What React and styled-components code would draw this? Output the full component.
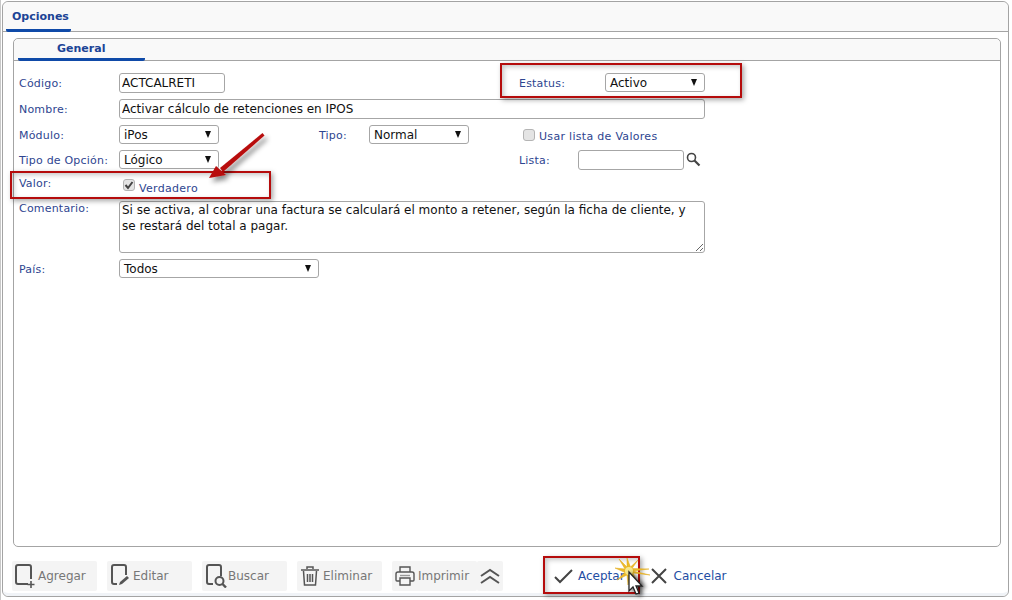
import React from "react"
import styled, { createGlobalStyle } from "styled-components"

const GlobalStyle = createGlobalStyle`
  html, body {
    margin: 0;
    padding: 0;
    background: #fff;
    font-family: "DejaVu Sans", Verdana, sans-serif;
  }
  * { box-sizing: border-box; }
`

const Page = styled.div`
  position: relative;
  width: 1012px;
  height: 600px;
  padding: 1px 3px 3px 2px;
  overflow: hidden;
  box-shadow: inset 1px 0 0 #c8c8c8;
`

const Window = styled.div`
  display: flex;
  flex-direction: column;
  height: 100%;
  border: 1px solid #a4a4a4;
  border-radius: 6px;
  background: #fff;
`

const TabBar = styled.div`
  display: flex;
  height: 30px;
  padding-left: 3px;
  border-bottom: 1px solid #a4a4a4;
  background: #f9f9f9;
  border-radius: 6px 6px 0 0;
`

const Tab = styled.div`
  width: ${p => p.$width}px;
  height: ${p => p.$height}px;
  padding-left: ${p => p.$indent}px;
  line-height: ${p => p.$height - 3 + (p.$drop || 0)}px;
  font-size: 11px;
  font-weight: bold;
  color: #1c4496;
  border-bottom: 3px solid #0f4aa8;
  border-radius: 0 0 2px 2px;
`

const Content = styled.div`
  flex: 1;
  padding: 6px 7px 0 10px;
  min-height: 0;
`

const InnerPanel = styled.div`
  height: 509px;
  border: 1px solid #a4a4a4;
  border-radius: 5px;
  background: #fff;
`

const InnerTabBar = styled.div`
  display: flex;
  height: 22px;
  padding-left: 4px;
  border-bottom: 1px solid #a4a4a4;
  background: #f9f9f9;
  border-radius: 5px 5px 0 0;
`

const Form = styled.div`
  display: grid;
  grid-template-columns: 100px 200px 50px 150px 86px 100px;
  grid-template-rows: 20px 20px 19px 19px 20px 52px 20px;
  row-gap: 6px;
  padding: 12px 0 0 5px;
`

const Label = styled.div`
  grid-column: ${p => p.$col || 1};
  font-size: 11px;
  line-height: 20px;
  letter-spacing: 0.2px;
  color: #2e4590;
  white-space: nowrap;
  transform: translateY(${p => p.$shift || 1}px);
`

const Field = styled.input`
  grid-column: ${p => p.$col || "2"};
  width: ${p => p.$width}px;
  height: 20px;
  padding: 0 2px;
  border: 1px solid #a6a6a6;
  border-radius: 3px;
  outline: none;
  background: #fff;
  color: #111;
  font-family: inherit;
  font-size: 12px;
`

const Select = styled.div`
  grid-column: ${p => p.$col || 2};
  display: flex;
  align-items: center;
  justify-content: space-between;
  width: ${p => p.$width}px;
  height: 19px;
  padding: 0 7px 0 4px;
  border: 1px solid #a6a6a6;
  border-radius: 3px;
  background: #fff;
  color: #111;
  font-size: 12px;
`

const Caret = styled.span`
  width: 0;
  height: 0;
  border-left: 3.5px solid transparent;
  border-right: 3.5px solid transparent;
  border-top: 7px solid #111;
`

const CheckRow = styled.div`
  grid-column: ${p => p.$col};
  display: flex;
  align-items: center;
  gap: 4px;
  padding-left: 4px;
`

const CheckBox = styled.span`
  display: flex;
  align-items: center;
  justify-content: center;
  width: 12px;
  height: 12px;
  border: 1px solid #b4b4b4;
  border-radius: 3px;
  background: #e4e4e4;
`

const CheckText = styled.span`
  font-size: 11px;
  letter-spacing: 0.3px;
  color: #2e4590;
  transform: translateY(${p => p.$shift || 0}px);
`

const LookupCell = styled.div`
  grid-column: 5 / 7;
  display: flex;
  align-items: center;
  gap: 2px;
`

const LookupLabel = styled(Label)`
  width: 57px;
`

const Comment = styled.textarea`
  grid-column: 2 / 7;
  width: 586px;
  height: 52px;
  padding: 0 2px;
  border: 1px solid #a6a6a6;
  border-radius: 3px;
  outline: none;
  resize: both;
  color: #111;
  font-family: inherit;
  font-size: 12px;
  line-height: 16px;
`

const Footer = styled.div`
  display: flex;
  align-items: center;
  height: 48px;
  padding: 11px 0 0 9px;
  border-bottom: 3px solid #f0f3f7;
  border-radius: 0 0 6px 6px;
`

const ToolGroup = styled.div`
  display: flex;
  gap: 10px;
`

const ToolButton = styled.div`
  display: flex;
  align-items: center;
  gap: ${p => p.$gap || 3}px;
  width: 85px;
  height: 30px;
  padding-left: 3px;
  background: #f4f4f4;
  border-radius: 2px;
  color: #777;
  font-size: 12px;
`

const ChevronButton = styled.div`
  display: flex;
  align-items: center;
  justify-content: center;
  width: 26px;
  height: 30px;
  margin-left: -10px;
  background: #f4f4f4;
  border-radius: 2px;
`

const ActionButton = styled.div`
  display: flex;
  align-items: center;
  gap: ${p => p.$gap}px;
  margin-left: ${p => p.$offset}px;
  color: #1f4ea3;
  font-size: 12px;
`

const Highlight = styled.div`
  position: absolute;
  left: ${p => p.$x}px;
  top: ${p => p.$y}px;
  width: ${p => p.$w}px;
  height: ${p => p.$h}px;
  border: 2px solid #b50c0c;
  box-shadow: 2px 2px 5px rgba(0, 0, 0, 0.35), inset 2px 2px 5px rgba(0, 0, 0, 0.22);
  pointer-events: none;
`

const Overlay = styled.svg`
  position: absolute;
  left: ${p => p.$x}px;
  top: ${p => p.$y}px;
  overflow: visible;
`

const iconStroke = { fill: "none", stroke: "#555", strokeWidth: 2 }

const AddIcon = () => (
  <svg width="22" height="24" viewBox="0 0 22 24">
    <path d="M13 20H3a2 2 0 0 1-2-2V3a2 2 0 0 1 2-2h11a2 2 0 0 1 2 2v12" {...iconStroke} />
    <path d="M16 17v7M12.5 20.5h7" {...iconStroke} strokeWidth="1.6" />
  </svg>
)

const EditIcon = () => (
  <svg width="22" height="24" viewBox="0 0 22 24">
    <path d="M7 20H4a2 2 0 0 1-2-2V3a2 2 0 0 1 2-2h10a2 2 0 0 1 2 2v8" {...iconStroke} />
    <path d="M9 21l1-3 7-6 2 2-7 6z" fill="#555" />
  </svg>
)

const SearchDocIcon = () => (
  <svg width="22" height="24" viewBox="0 0 22 24">
    <path d="M8 20H4a2 2 0 0 1-2-2V3a2 2 0 0 1 2-2h10a2 2 0 0 1 2 2v9" {...iconStroke} />
    <circle cx="14.5" cy="17" r="4" {...iconStroke} />
    <path d="M17.5 20l3.5 3.5" {...iconStroke} strokeWidth="2.4" />
  </svg>
)

const TrashIcon = () => (
  <svg width="20" height="22" viewBox="0 0 20 22">
    <path d="M1 5h18M7 4V2h6v2" {...iconStroke} strokeWidth="1.5" />
    <path d="M3.5 6l1 14h11l1-14" {...iconStroke} strokeWidth="1.5" />
    <path d="M7.5 9v8M10 9v8M12.5 9v8" {...iconStroke} strokeWidth="1.5" />
  </svg>
)

const PrinterIcon = () => (
  <svg width="20" height="20" viewBox="0 0 20 20">
    <path d="M5 6V1h10v5" {...iconStroke} strokeWidth="1.4" />
    <path d="M5 15H2a1 1 0 0 1-1-1V8a2 2 0 0 1 2-2h14a2 2 0 0 1 2 2v6a1 1 0 0 1-1 1h-3" {...iconStroke} strokeWidth="1.4" />
    <path d="M5 12h10v7H5z" {...iconStroke} strokeWidth="1.4" />
    <path d="M5 9.5h10" stroke="#999" strokeWidth="1.4" />
  </svg>
)

const ChevronsUp = () => (
  <svg width="20" height="16" viewBox="0 0 20 16">
    <path d="M1 8l9-6 9 6M1 15l9-6 9 6" fill="none" stroke="#555" strokeWidth="2" />
  </svg>
)

const SearchIcon = () => (
  <svg width="15" height="15" viewBox="0 0 15 15">
    <circle cx="5.5" cy="5.5" r="4" fill="none" stroke="#444" strokeWidth="1.6" />
    <path d="M8.5 8.5l5 5" stroke="#444" strokeWidth="2.2" />
  </svg>
)

const CheckIcon = () => (
  <svg width="22" height="18" viewBox="0 0 22 18">
    <path d="M3 10l5 5L20 3" fill="none" stroke="#444" strokeWidth="2" />
  </svg>
)

const CrossIcon = () => (
  <svg width="18" height="18" viewBox="0 0 18 18">
    <path d="M2 2l14 14M16 2L2 16" fill="none" stroke="#444" strokeWidth="2" />
  </svg>
)

const App = () => (
  <>
    <GlobalStyle />
    <Page>
      <Window>
        <TabBar>
          <Tab $width={65} $height={30} $indent={6} $drop={2}>Opciones</Tab>
        </TabBar>
        <Content>
          <InnerPanel>
            <InnerTabBar>
              <Tab $width={127} $height={22} $indent={39}>General</Tab>
            </InnerTabBar>
            <Form>
              <Label>Código:</Label>
              <Field $width={106} defaultValue="ACTCALRETI" />
              <Label $col={5}>Estatus:</Label>
              <Select $col={6} $width={100}>Activo<Caret /></Select>

              <Label>Nombre:</Label>
              <Field $col="2 / 7" $width={586} defaultValue="Activar cálculo de retenciones en IPOS" />

              <Label>Módulo:</Label>
              <Select $width={100}>iPos<Caret /></Select>
              <Label $col={3}>Tipo:</Label>
              <Select $col={4} $width={100}>Normal<Caret /></Select>
              <CheckRow $col="5 / 7">
                <CheckBox />
                <CheckText $shift={2}>Usar lista de Valores</CheckText>
              </CheckRow>

              <Label>Tipo de Opción:</Label>
              <Select $width={100}>Lógico<Caret /></Select>
              <LookupCell>
                <LookupLabel>Lista:</LookupLabel>
                <Field $width={106} />
                <SearchIcon />
              </LookupCell>

              <Label $shift={-1}>Valor:</Label>
              <CheckRow $col="2 / 4">
                <CheckBox>
                  <svg width="10" height="10" viewBox="0 0 10 10">
                    <path d="M1.5 5l2.5 3 4.5-6" fill="none" stroke="#444" strokeWidth="2" />
                  </svg>
                </CheckBox>
                <CheckText $shift={3}>Verdadero</CheckText>
              </CheckRow>

              <Label $shift={-2}>Comentario:</Label>
              <Comment defaultValue={"Si se activa, al cobrar una factura se calculará el monto a retener, según la ficha de cliente, y se restará del total a pagar."} />

              <Label>País:</Label>
              <Select $width={200}>Todos<Caret /></Select>
            </Form>
          </InnerPanel>
        </Content>
        <Footer>
          <ToolGroup>
            <ToolButton $gap={1}><AddIcon />Agregar</ToolButton>
            <ToolButton $gap={1}><EditIcon />Editar</ToolButton>
            <ToolButton $gap={1}><SearchDocIcon />Buscar</ToolButton>
            <ToolButton><TrashIcon />Eliminar</ToolButton>
            <ToolButton><PrinterIcon />Imprimir</ToolButton>
            <ChevronButton><ChevronsUp /></ChevronButton>
          </ToolGroup>
          <ActionButton $offset={49} $gap={4}><CheckIcon />Aceptar</ActionButton>
          <ActionButton $offset={25} $gap={6}><CrossIcon />Cancelar</ActionButton>
        </Footer>
      </Window>

      <Highlight $x={500} $y={63} $w={242} $h={35} />
      <Highlight $x={10} $y={171} $w={261} $h={28} />
      <Highlight $x={543} $y={556} $w={97} $h={38} />

      <Overlay $x={205} $y={130} width="62" height="55" viewBox="0 0 62 55">
        <defs>
          <filter id="arrowShadow" x="-30%" y="-30%" width="170%" height="170%">
            <feDropShadow dx="3" dy="4" stdDeviation="2.5" floodColor="#000" floodOpacity="0.45" />
          </filter>
        </defs>
        <g filter="url(#arrowShadow)">
          <path d="M57.5 3L59.5 5.5 18 42 15 38z" fill="#b80c0c" />
          <path d="M4 48L11 36l10 9z" fill="#b80c0c" />
        </g>
      </Overlay>

      <Overlay $x={611} $y={554} width="40" height="34" viewBox="0 0 40 34">
        <path
          d="M16 4L19.5 13 27 6 21 14.5 38 15 22 17 39 21 22 19 26 28 19 21 17 31 16 21 6 26 14 18.5 4 14 14 15 8 5 16 13z"
          fill="#ecbb2a"
          stroke="#e0a818"
          strokeWidth="0.5"
        />
        <circle cx="18" cy="17" r="4" fill="#f7e88c" />
      </Overlay>

      <Overlay $x={627} $y={571} width="20" height="30" viewBox="0 0 20 30">
        <defs>
          <filter id="cursorShadow" x="-40%" y="-30%" width="200%" height="170%">
            <feDropShadow dx="3" dy="1" stdDeviation="2" floodColor="#000" floodOpacity="0.65" />
          </filter>
        </defs>
        <path d="M2 1v19l4-4 3 7 3-1-3-7h6z" fill="#fff" stroke="#222" strokeWidth="1.3" filter="url(#cursorShadow)" />
      </Overlay>
    </Page>
  </>
)

export default App
